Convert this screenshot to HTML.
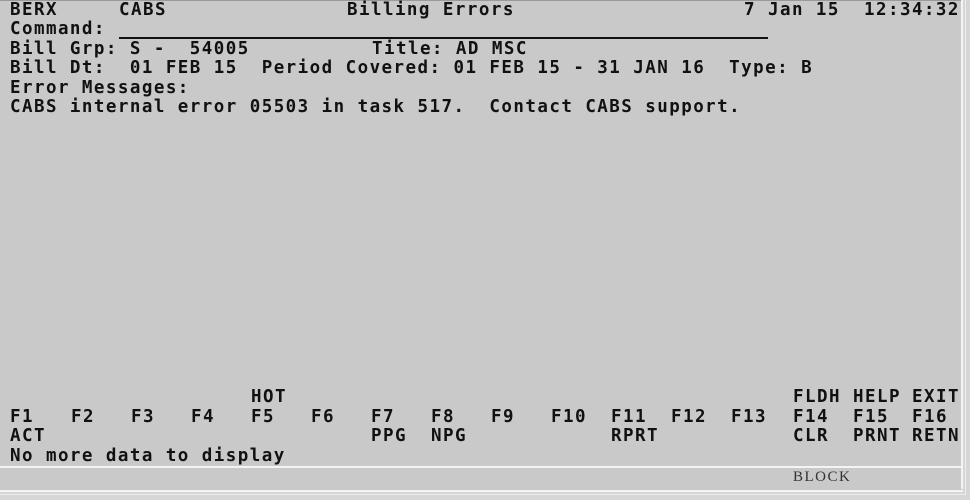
<!DOCTYPE html>
<html><head><meta charset="utf-8"><style>
html,body{margin:0;padding:0}
body{width:970px;height:500px;background:#d6d6d6;position:relative;overflow:hidden}
#scr{position:absolute;left:0;top:0;width:961px;height:490px;background:#c9c9c9;border-top:1px solid #9a9a9a}
.t{position:absolute;font-family:"DejaVu Sans Mono","Liberation Mono",monospace;font-weight:bold;font-size:17.5px;letter-spacing:1.45px;color:#111;white-space:pre;line-height:19px}
.vl{position:absolute;left:961px;top:0;width:2px;height:492px;background:#f4f4f4}
.vl2{position:absolute;left:965px;top:0;width:1px;height:494px;background:#ececec}
.hl{position:absolute;left:0;width:962px;height:2px;background:#f4f4f4}
#blk{position:absolute;left:793px;top:469px;font-family:"Liberation Serif",serif;font-size:15px;color:#333;letter-spacing:1.5px}
</style></head><body>
<div id="scr"></div>
<div class="vl"></div><div class="vl2"></div>
<div class="hl" style="top:466px"></div>
<div class="hl" style="top:490px"></div>
<div style="position:absolute;left:0;top:489px;width:963px;height:1px;background:#c9c9c9"></div>
<div style="position:absolute;left:0;top:494px;width:966px;height:1px;background:#ececec"></div>

<div class="t" style="left:10px;top:1px">BERX</div>
<div class="t" style="left:119px;top:1px">CABS</div>
<div class="t" style="left:347px;top:1px">Billing Errors</div>
<div class="t" style="left:744px;top:1px">7 Jan 15</div>
<div class="t" style="left:864px;top:1px">12:34:32</div>

<div class="t" style="left:10px;top:20px">Command:</div>
<div style="position:absolute;left:119px;top:37px;width:649px;height:2px;background:#111"></div>

<div class="t" style="left:10px;top:40px">Bill Grp: S -  54005</div>
<div class="t" style="left:372px;top:40px">Title: AD MSC</div>

<div class="t" style="left:10px;top:59px">Bill Dt:  01 FEB 15  Period Covered: 01 FEB 15 - 31 JAN 16  Type: B</div>
<div class="t" style="left:10px;top:79px">Error Messages:</div>
<div class="t" style="left:10px;top:98px">CABS internal error 05503 in task 517.  Contact CABS support.</div>

<div class="t" style="left:251px;top:388px">HOT</div>
<div class="t" style="left:793px;top:388px">FLDH</div>
<div class="t" style="left:853px;top:388px">HELP</div>
<div class="t" style="left:912px;top:388px">EXIT</div>

<div class="t" style="left:10px;top:408px">F1</div>
<div class="t" style="left:71px;top:408px">F2</div>
<div class="t" style="left:131px;top:408px">F3</div>
<div class="t" style="left:191px;top:408px">F4</div>
<div class="t" style="left:251px;top:408px">F5</div>
<div class="t" style="left:311px;top:408px">F6</div>
<div class="t" style="left:371px;top:408px">F7</div>
<div class="t" style="left:431px;top:408px">F8</div>
<div class="t" style="left:491px;top:408px">F9</div>
<div class="t" style="left:551px;top:408px">F10</div>
<div class="t" style="left:611px;top:408px">F11</div>
<div class="t" style="left:671px;top:408px">F12</div>
<div class="t" style="left:731px;top:408px">F13</div>
<div class="t" style="left:793px;top:408px">F14</div>
<div class="t" style="left:853px;top:408px">F15</div>
<div class="t" style="left:912px;top:408px">F16</div>

<div class="t" style="left:10px;top:427px">ACT</div>
<div class="t" style="left:371px;top:427px">PPG</div>
<div class="t" style="left:431px;top:427px">NPG</div>
<div class="t" style="left:611px;top:427px">RPRT</div>
<div class="t" style="left:793px;top:427px">CLR</div>
<div class="t" style="left:853px;top:427px">PRNT</div>
<div class="t" style="left:912px;top:427px">RETN</div>

<div class="t" style="left:10px;top:447px">No more data to display</div>
<div id="blk">BLOCK</div>
</body></html>
